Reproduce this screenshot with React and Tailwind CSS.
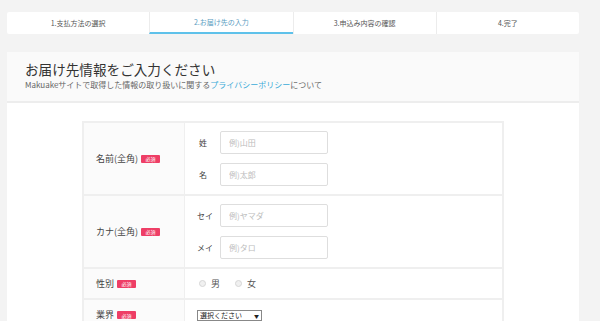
const steps = ["1.支払方法の選択", "2.お届け先の入力", "3.申込み内容の確認", "4.完了"];

const Required = () => (
  <span className="ml-[3px] inline-flex h-[8px] w-[19px] items-center justify-center rounded-[1px] bg-[#ee3e66] text-[5px] leading-none text-white">
    必須
  </span>
);

const TextField = ({ label, placeholder, wide }) => (
  <div className="flex items-center">
    <span className={`${wide ? "w-[23px]" : "w-[21px]"} text-[8px] text-[#444]`}>{label}</span>
    <input
      placeholder={placeholder}
      className="h-[23px] w-[108px] rounded-[2px] border border-[#dedede] bg-white px-[8px] text-[8px] text-[#333] outline-none placeholder:text-[#bdbdbd]"
    />
  </div>
);

const Radio = ({ label }) => (
  <label className="flex items-center gap-[5px] text-[9px] text-[#555]">
    <span className="h-[7px] w-[7px] rounded-full border border-[#d6d6d6] bg-[#f0f0f0]" />
    {label}
  </label>
);

const Row = ({ label, children, className = "" }) => (
  <div className="flex border-b-2 border-[#efefef]">
    <div className="flex w-[101px] shrink-0 items-center border-r border-[#efefef] bg-[#fbfbfb] pl-[12px] text-[9px] text-[#444]">
      {label}
      <Required />
    </div>
    <div className={`flex-1 ${className}`}>{children}</div>
  </div>
);

export default function App() {
  return (
    <div
      className="min-h-[321px] w-[600px] overflow-hidden bg-[#f3f3f3] pt-[12px]"
      style={{ fontFamily: '"Noto Sans CJK JP", "Noto Sans", sans-serif' }}
    >
      <div className="ml-[7px] flex h-[22px] w-[572px] overflow-hidden rounded-[2px] bg-white">
        {steps.map((step, i) => (
          <div
            key={step}
            className={`flex flex-1 items-center justify-center text-[7px] ${
              i > 0 ? "border-l border-[#ececec]" : ""
            } ${i === 1 ? "border-b-2 border-b-[#5ec1ea] text-[#5a9cbf]" : "text-[#555]"}`}
          >
            {step}
          </div>
        ))}
      </div>

      <div className="ml-[7px] mt-[18px] w-[572px] bg-white">
        <div className="border-b-2 border-[#ededed] bg-[#fafafa] px-[18px] pb-[10px] pt-[7px]">
          <h1 className="text-[13.6px] leading-[20px] text-[#333]">お届け先情報をご入力ください</h1>
          <p className="text-[8px] leading-[12px] text-[#666]">
            Makuakeサイトで取得した情報の取り扱いに関する
            <span className="text-[#3aabd8]">プライバシーポリシー</span>
            について
          </p>
        </div>

        <div className="px-[75px] pt-[18px]">
          <div className="border-x-2 border-t-2 border-[#efefef]">
            <Row label="名前(全角)" className="flex flex-col gap-[9px] py-[8px] pl-[14px]">
              <TextField label="姓" placeholder="例)山田" />
              <TextField label="名" placeholder="例)太郎" />
            </Row>
            <Row label="カナ(全角)" className="flex flex-col gap-[9px] py-[8px] pl-[12px]">
              <TextField wide label="セイ" placeholder="例)ヤマダ" />
              <TextField wide label="メイ" placeholder="例)タロ" />
            </Row>
            <Row label="性別" className="flex h-[29px] items-center gap-[15px] pl-[14px]">
              <Radio label="男" />
              <Radio label="女" />
            </Row>
            <Row label="業界" className="flex h-[30px] items-center pl-[12px]">
              <div className="flex h-[11px] w-[65px] items-center justify-between border border-[#888] bg-white px-[2px] text-[7px] leading-none text-[#222]">
                <span>選択ください</span>
                <span className="text-[5px]">▼</span>
              </div>
            </Row>
          </div>
        </div>
      </div>
    </div>
  );
}
